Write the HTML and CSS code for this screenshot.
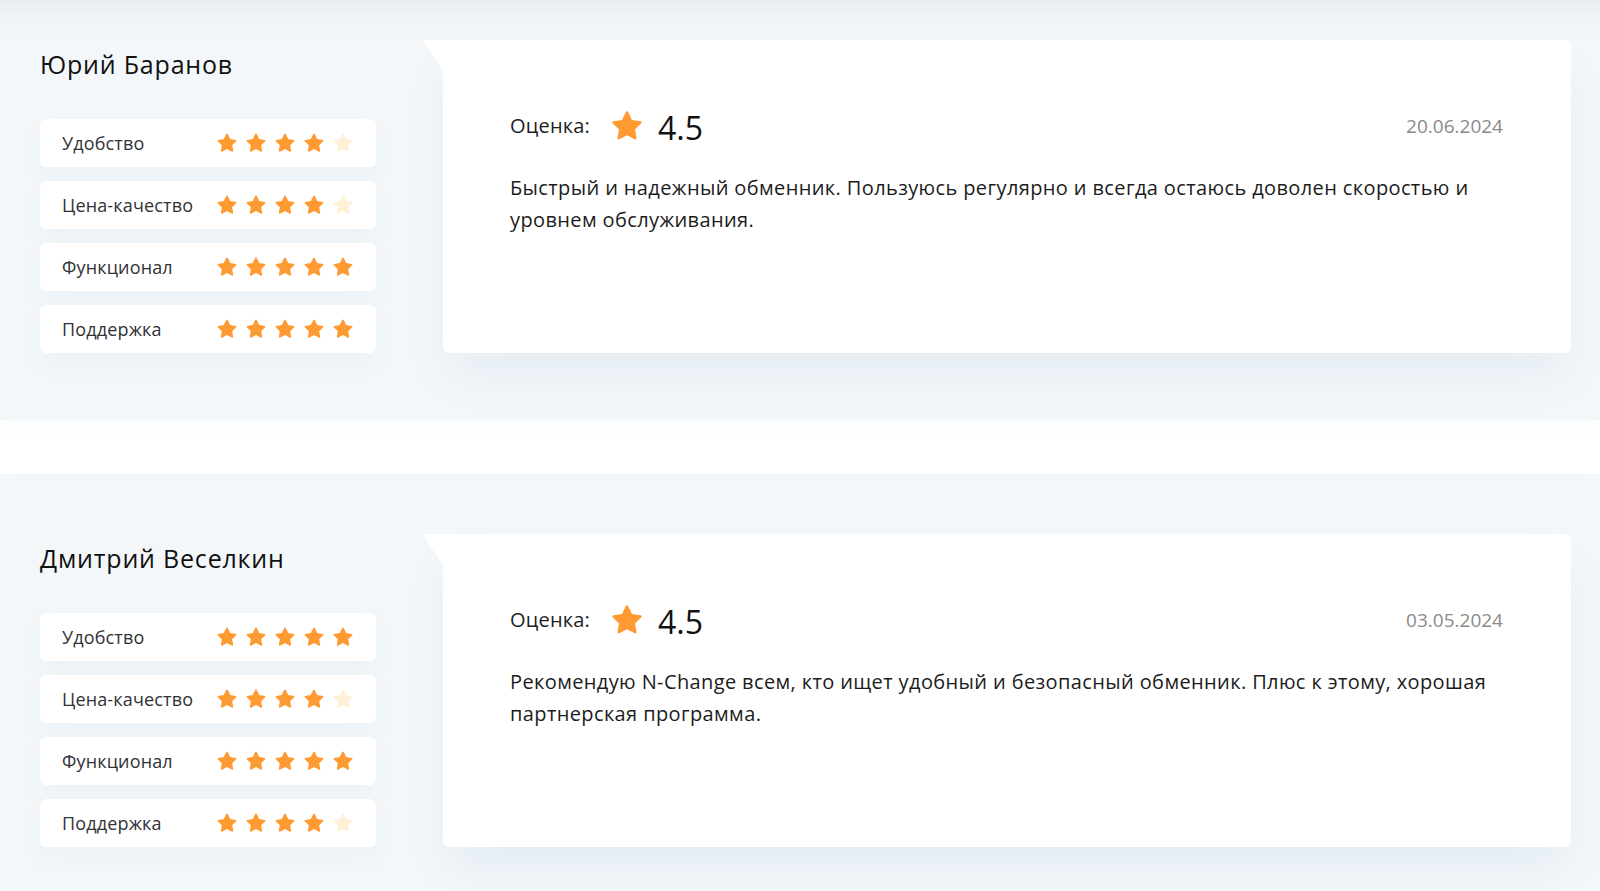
FILE: index.html
```html
<!DOCTYPE html>
<html lang="ru">
<head>
<meta charset="utf-8">
<title>Отзывы</title>
<link rel="stylesheet" href="styles.css">
</head>
<body>
<svg width="0" height="0" class="defs" aria-hidden="true">
  <defs>
    <symbol id="star" viewBox="0 0 24 24">
      <path d="M12 1.6c.35 0 .66.2.8.52l2.7 5.62 6.1.86c.72.1 1.01.99.49 1.5l-4.440 4.3 1.07 6.1c.13.71-.62 1.25-1.26.91L12 18.5l-5.46 2.91c-.64.34-1.390-.2-1.26-.91l1.07-6.1-4.44-4.3c-.52-.51-.23-1.4.49-1.5l6.1-.86 2.7-5.62c.14-.32.45-.52.8-.52z"/>
    </symbol>
  </defs>
</svg>

<main class="reviews">
  <section class="review">
    <div class="author">
      <h3 class="name">Юрий Баранов</h3>
      <ul class="criteria">
        <li class="crit"><span class="crit-name">Удобство</span>
          <span class="stars"><svg class="s on"><use href="#star"/></svg><svg class="s on"><use href="#star"/></svg><svg class="s on"><use href="#star"/></svg><svg class="s on"><use href="#star"/></svg><svg class="s off"><use href="#star"/></svg></span></li>
        <li class="crit"><span class="crit-name">Цена-качество</span>
          <span class="stars"><svg class="s on"><use href="#star"/></svg><svg class="s on"><use href="#star"/></svg><svg class="s on"><use href="#star"/></svg><svg class="s on"><use href="#star"/></svg><svg class="s off"><use href="#star"/></svg></span></li>
        <li class="crit"><span class="crit-name">Функционал</span>
          <span class="stars"><svg class="s on"><use href="#star"/></svg><svg class="s on"><use href="#star"/></svg><svg class="s on"><use href="#star"/></svg><svg class="s on"><use href="#star"/></svg><svg class="s on"><use href="#star"/></svg></span></li>
        <li class="crit"><span class="crit-name">Поддержка</span>
          <span class="stars"><svg class="s on"><use href="#star"/></svg><svg class="s on"><use href="#star"/></svg><svg class="s on"><use href="#star"/></svg><svg class="s on"><use href="#star"/></svg><svg class="s on"><use href="#star"/></svg></span></li>
      </ul>
    </div>
    <article class="card">
      <div class="card-head">
        <div class="score">
          <span class="score-label">Оценка:</span>
          <svg class="score-star"><use href="#star"/></svg>
          <span class="score-value">4.5</span>
        </div>
        <time class="date">20.06.2024</time>
      </div>
      <p class="text">Быстрый и надежный обменник. Пользуюсь регулярно и всегда остаюсь доволен скоростью и уровнем обслуживания.</p>
    </article>
  </section>

  <section class="review">
    <div class="author">
      <h3 class="name">Дмитрий Веселкин</h3>
      <ul class="criteria">
        <li class="crit"><span class="crit-name">Удобство</span>
          <span class="stars"><svg class="s on"><use href="#star"/></svg><svg class="s on"><use href="#star"/></svg><svg class="s on"><use href="#star"/></svg><svg class="s on"><use href="#star"/></svg><svg class="s on"><use href="#star"/></svg></span></li>
        <li class="crit"><span class="crit-name">Цена-качество</span>
          <span class="stars"><svg class="s on"><use href="#star"/></svg><svg class="s on"><use href="#star"/></svg><svg class="s on"><use href="#star"/></svg><svg class="s on"><use href="#star"/></svg><svg class="s off"><use href="#star"/></svg></span></li>
        <li class="crit"><span class="crit-name">Функционал</span>
          <span class="stars"><svg class="s on"><use href="#star"/></svg><svg class="s on"><use href="#star"/></svg><svg class="s on"><use href="#star"/></svg><svg class="s on"><use href="#star"/></svg><svg class="s on"><use href="#star"/></svg></span></li>
        <li class="crit"><span class="crit-name">Поддержка</span>
          <span class="stars"><svg class="s on"><use href="#star"/></svg><svg class="s on"><use href="#star"/></svg><svg class="s on"><use href="#star"/></svg><svg class="s on"><use href="#star"/></svg><svg class="s off"><use href="#star"/></svg></span></li>
      </ul>
    </div>
    <article class="card">
      <div class="card-head">
        <div class="score">
          <span class="score-label">Оценка:</span>
          <svg class="score-star"><use href="#star"/></svg>
          <span class="score-value">4.5</span>
        </div>
        <time class="date">03.05.2024</time>
      </div>
      <p class="text">Рекомендую N-Change всем, кто ищет удобный и безопасный обменник. Плюс к этому, хорошая партнерская программа.</p>
    </article>
  </section>
</main>
</body>
</html>
```
FILE: styles.css
```css
html, body {
  margin: 0;
  padding: 0;
}
body {
  background: #ffffff;
  font-family: "Open Sans", "Noto Sans", sans-serif;
  color: #1c1c1c;
  overflow: hidden;
}
.defs {
  position: absolute;
  width: 0;
  height: 0;
}
.reviews {
  display: flex;
  flex-direction: column;
  gap: 54px;
  margin-top: -20px;
}
.review {
  display: flex;
  align-items: flex-start;
  height: 440px;
  box-sizing: border-box;
  padding: 60px 29px 0 40px;
  background: #f3f7fa;
  box-shadow: 0 8px 18px rgba(60, 90, 120, 0.025);
}
.review:first-child {
  background: linear-gradient(#e4e8ec 0, #e9edf1 20px, #f1f5f8 42px, #f3f7fa 60px);
}
.author {
  width: 336px;
  flex: none;
  padding-top: 9px;
}
.name {
  margin: 0;
  font-size: 25px;
  line-height: 30px;
  font-weight: 400;
  letter-spacing: 0.8px;
  color: #111111;
}
.criteria {
  list-style: none;
  margin: 40px 0 0;
  padding: 0;
  display: flex;
  flex-direction: column;
  gap: 14px;
}
.crit {
  height: 48px;
  box-sizing: border-box;
  padding: 0 22px;
  background: #ffffff;
  border-radius: 6px;
  display: flex;
  align-items: center;
  justify-content: space-between;
  box-shadow: 0 10px 24px rgba(50, 100, 150, 0.04);
}
.crit-name {
  font-size: 18px;
  letter-spacing: 0.15px;
  color: #303236;
}
.stars {
  display: flex;
  gap: 7px;
}
.s {
  width: 22px;
  height: 22px;
}
.s.on { fill: #ff9a33; }
.s.off { fill: #fff1d8; }
.card {
  flex: 1;
  position: relative;
  margin-left: 67px;
  height: 313px;
  box-sizing: border-box;
  padding: 71px 68px 0 67px;
  background: #ffffff;
  border-radius: 0 6px 6px 6px;
  box-shadow: 0 26px 44px -6px rgba(40, 95, 145, 0.075);
}
.card::before {
  content: "";
  position: absolute;
  left: -21px;
  top: 0;
  width: 22px;
  height: 32px;
  background: #ffffff;
  clip-path: polygon(0 0, 100% 0, 100% 100%);
}
.card-head {
  display: flex;
  align-items: center;
  justify-content: space-between;
  height: 30px;
}
.score {
  display: flex;
  align-items: center;
}
.score-label {
  font-size: 20px;
  line-height: 1;
  letter-spacing: 0.2px;
  color: #1e1e1e;
}
.score-star {
  width: 34px;
  height: 34px;
  fill: #ff9a33;
  margin-left: 20px;
}
.score-value {
  font-size: 32px;
  line-height: 1;
  color: #111111;
  margin-left: 14px;
  padding-top: 4px;
}
.date {
  font-size: 19px;
  line-height: 1;
  color: #8a8a8a;
}
.text {
  margin: 31px 0 0;
  font-size: 20px;
  line-height: 32px;
  letter-spacing: 0.38px;
  color: #1c1c1c;
}
```
